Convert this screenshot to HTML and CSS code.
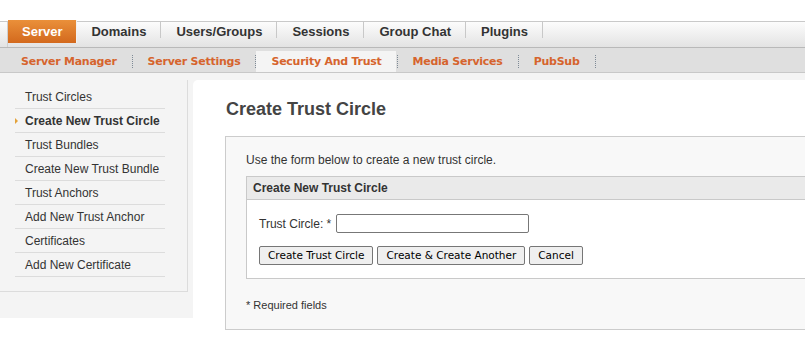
FILE: index.html
```html
<!DOCTYPE html>
<html lang="en">
<head>
    <meta charset="UTF-8">
    <meta name="viewport" content="width=device-width, initial-scale=1.0">
    <title>Create Trust Circle</title>
    <link rel="stylesheet" href="styles.css">
</head>
<body>
<div class="page">
    <div class="tabbar">
        <ul class="tabs">
            <li class="tab active"><a href="#">Server</a></li>
            <li class="tab"><a href="#">Domains</a></li>
            <li class="tab"><a href="#">Users/Groups</a></li>
            <li class="tab"><a href="#">Sessions</a></li>
            <li class="tab"><a href="#">Group Chat</a></li>
            <li class="tab"><a href="#">Plugins</a></li>
        </ul>
    </div>
    <div class="subnav">
        <ul class="subtabs">
            <li class="subtab"><a href="#">Server Manager</a></li>
            <li class="subtab"><a href="#">Server Settings</a></li>
            <li class="subtab active"><a href="#">Security And Trust</a></li>
            <li class="subtab"><a href="#">Media Services</a></li>
            <li class="subtab"><a href="#">PubSub</a></li>
        </ul>
    </div>

    <div class="main">
        <div class="sidebar">
            <ul class="sidenav">
                <li><a href="#">Trust Circles</a></li>
                <li class="current"><a href="#">Create New Trust Circle</a></li>
                <li><a href="#">Trust Bundles</a></li>
                <li><a href="#">Create New Trust Bundle</a></li>
                <li><a href="#">Trust Anchors</a></li>
                <li><a href="#">Add New Trust Anchor</a></li>
                <li><a href="#">Certificates</a></li>
                <li><a href="#">Add New Certificate</a></li>
            </ul>
        </div>

        <div class="content">
            <div class="panel">
                <h1>Create Trust Circle</h1>
                <div class="formbox">
                    <p class="intro">Use the form below to create a new trust circle.</p>
                    <div class="fieldset">
                        <div class="legend">Create New Trust Circle</div>
                        <div class="fields">
                            <div class="field-row">
                                <label for="circleName">Trust Circle: *</label>
                                <input type="text" id="circleName">
                            </div>
                            <div class="button-row">
                                <button type="button">Create Trust Circle</button>
                                <button type="button">Create &amp; Create Another</button>
                                <button type="button">Cancel</button>
                            </div>
                        </div>
                    </div>
                    <p class="required">* Required fields</p>
                </div>
            </div>
        </div>
    </div>
</div>
</body>
</html>
```

FILE: styles.css
```css
body {
    margin: 0;
    padding: 0;
    font-family: "Liberation Sans", Arial, sans-serif;
    font-size: 12px;
    color: #333;
    background-color: white;
}
ul {
    list-style: none;
    margin: 0;
    padding: 0;
}
a {
    color: inherit;
    text-decoration: none;
}
.page {
    height: 353px;
    overflow: hidden;
}

/* main tabs */
.tabbar {
    margin-top: 21px;
    height: 25px;
    border-top: 1px solid #c9c9c9;
    border-bottom: 1px solid #b9b9b9;
    background: linear-gradient(#fcfcfc, #e3e3e3);
}
.tabs {
    display: flex;
    align-items: flex-start;
    height: 25px;
    margin-left: 7px;
    border-left: 1px solid #cfcfcf;
}
.tab {
    margin-top: -2px;
    height: 23px;
    line-height: 23px;
    padding: 0 15px 0 14px;
    font-size: 13px;
    font-weight: bold;
    color: #333;
    border-right: 1px solid transparent;
    background: linear-gradient(#c8c8c8, #c8c8c8) right 1px / 1px 17px no-repeat;
}
.tab.active {
    color: white;
    padding: 0 14px 0 14px;
    border-right: 1px solid #f2f2f2;
    background: linear-gradient(#ea903a, #d3691d);
}

/* sub tabs */
.subnav {
    height: 24px;
    background-color: #dfdfdf;
    border-bottom: 1px solid #c8c8c8;
}
.subtabs {
    display: flex;
    padding-left: 6px;
}
.subtab {
    margin-top: 3px;
    height: 21px;
    line-height: 21px;
    padding: 0 16px 0 15px;
    font-family: "DejaVu Sans", Verdana, sans-serif;
    font-size: 11px;
    font-weight: bold;
    letter-spacing: -0.25px;
    color: #d6642d;
    background: repeating-linear-gradient(to bottom, #7e8a96 0 1px, transparent 1px 2px) right 4px / 1px 14px no-repeat;
}
.subtab.active {
    background:
        repeating-linear-gradient(to bottom, #7e8a96 0 1px, transparent 1px 2px) right 4px / 1px 14px no-repeat,
        linear-gradient(#f4f4f4, #f4f4f4) left top / calc(100% - 2px) 100% no-repeat;
}

/* layout */
.main {
    display: flex;
    align-items: flex-start;
}
.sidebar {
    width: 193px;
    flex-shrink: 0;
    background-color: #f4f4f4;
    padding-bottom: 26px;
}
.sidenav {
    margin-top: 7px;
    width: 172px;
    padding: 5px 0 14px 15px;
    border-right: 1px solid #dcdcdc;
    border-bottom: 1px solid #dcdcdc;
}
.sidenav li {
    position: relative;
    width: 140px;
    height: 23px;
    line-height: 24px;
    padding-left: 10px;
    border-bottom: 1px solid #dcdcdc;
    white-space: nowrap;
}
.sidenav li.current {
    font-weight: bold;
}
.sidenav li.current::before {
    content: '';
    position: absolute;
    left: 0;
    top: 9px;
    border-left: 3px solid #e3a23a;
    border-top: 3px solid transparent;
    border-bottom: 3px solid transparent;
}

.content {
    flex: 1;
    padding-top: 7px;
    background-color: #f4f4f4;
}
.panel {
    background-color: white;
    border-top-left-radius: 5px;
    padding: 18px 0 24px 32px;
}
h1 {
    margin: 0 0 16px 1px;
    font-size: 18px;
    line-height: 22px;
    color: #444;
}

/* form */
.formbox {
    width: 640px;
    border: 1px solid #cccccc;
    background-color: #f8f8f8;
    padding: 16px 0 17px 20px;
}
.intro {
    margin: 0 0 8px 0;
    line-height: 15px;
}
.fieldset {
    border: 1px solid #c9c9c9;
    background-color: white;
}
.legend {
    height: 22px;
    line-height: 22px;
    padding-left: 6px;
    font-weight: bold;
    background-color: #eaeaea;
    border-bottom: 1px solid #c9c9c9;
}
.fields {
    padding: 14px 0 13px 12px;
    display: flex;
    flex-direction: column;
    gap: 13px;
}
.field-row {
    display: flex;
    align-items: center;
    gap: 5px;
}
.field-row input {
    box-sizing: border-box;
    width: 193px;
    height: 19px;
    padding: 0 1px;
    margin: 0;
    border: 1px solid #777;
    border-radius: 2px;
}
.button-row {
    display: flex;
    gap: 4px;
}
.button-row button {
    height: 19px;
    margin: 0;
    padding: 0 8px;
    font-family: "DejaVu Sans", Verdana, sans-serif;
    font-size: 10.5px;
    line-height: 15px;
    color: black;
    background-color: #efefef;
    border: 1px solid #767676;
    border-radius: 2px;
}
.required {
    margin: 20px 0 0 0;
    font-size: 11px;
    line-height: 13px;
}
```
